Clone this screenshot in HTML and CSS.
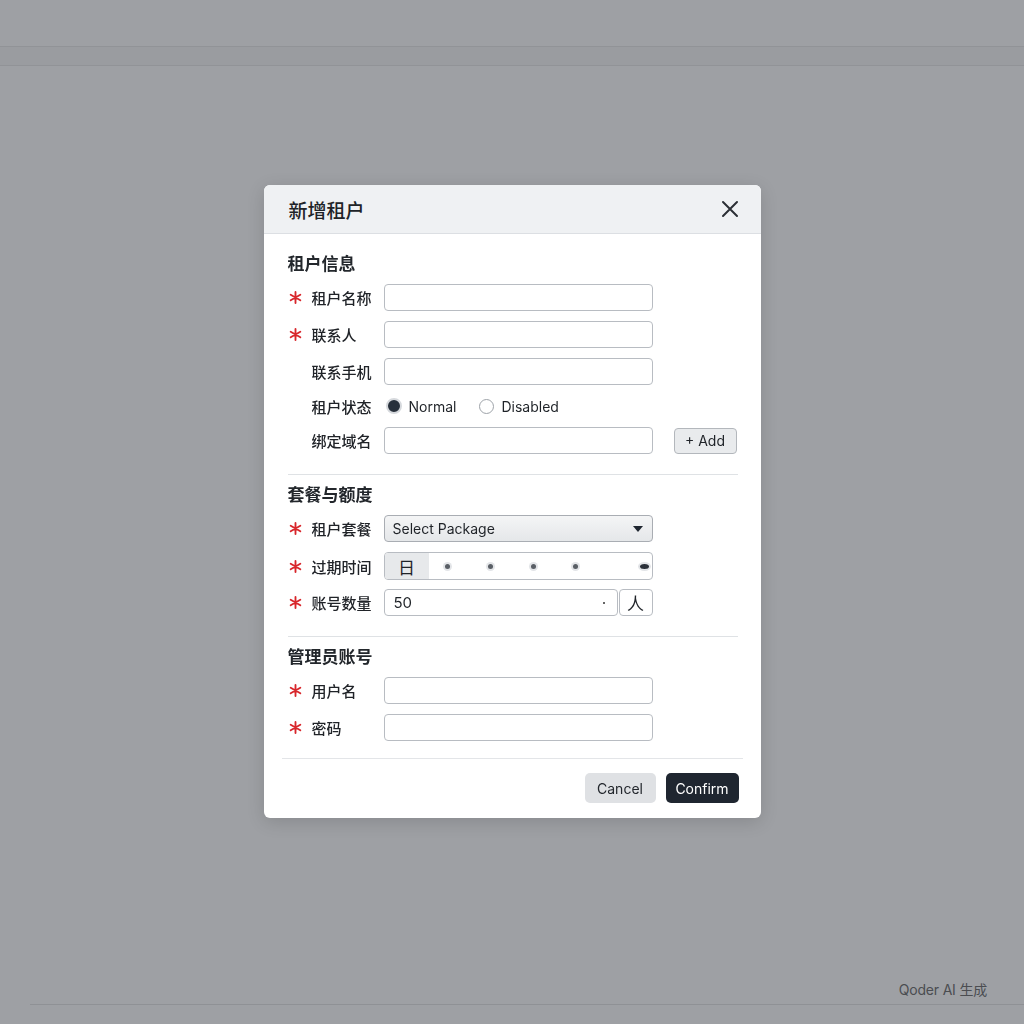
FILE: index.html
```html
<!DOCTYPE html>
<html lang="zh-CN">
<head>
<meta charset="utf-8">
<title>新增租户</title>
<link rel="stylesheet" href="styles.css">
</head>
<body>
<div class="page">
  <div class="topbar"></div>
  <div class="spacer"></div>
  <div class="watermark">Qoder AI 生成</div>
  <div class="bottom-line"></div>
</div>

<div class="overlay">
  <div class="modal">
    <div class="modal-header">
      <span class="modal-title">新增租户</span>
      <svg class="close" width="18" height="18" viewBox="0 0 18 18"><path d="M2 2L16 16M16 2L2 16" stroke="#2b2f35" stroke-width="2" stroke-linecap="round"/></svg>
    </div>
    <div class="modal-body">
      <section class="section">
        <h3 class="section-title">租户信息</h3>
        <div class="row">
          <span class="req"><svg width="13" height="13" viewBox="0 0 14 14"><path d="M7 1V13M1.8 4L12.2 10M12.2 4L1.8 10" stroke="#d8262b" stroke-width="2" stroke-linecap="round"/></svg></span>
          <label class="label">租户名称</label>
          <div class="input"></div>
        </div>
        <div class="row">
          <span class="req"><svg width="13" height="13" viewBox="0 0 14 14"><path d="M7 1V13M1.8 4L12.2 10M12.2 4L1.8 10" stroke="#d8262b" stroke-width="2" stroke-linecap="round"/></svg></span>
          <label class="label">联系人</label>
          <div class="input"></div>
        </div>
        <div class="row">
          <span class="req"></span>
          <label class="label">联系手机</label>
          <div class="input"></div>
        </div>
        <div class="row row-radio">
          <span class="req"></span>
          <label class="label">租户状态</label>
          <div class="radios">
            <span class="radio checked"></span><span class="radio-text">Normal</span>
            <span class="radio"></span><span class="radio-text">Disabled</span>
          </div>
        </div>
        <div class="row">
          <span class="req"></span>
          <label class="label">绑定域名</label>
          <div class="input"></div>
          <button class="btn-add">+ Add</button>
        </div>
      </section>
      <section class="section">
        <h3 class="section-title">套餐与额度</h3>
        <div class="row">
          <span class="req"><svg width="13" height="13" viewBox="0 0 14 14"><path d="M7 1V13M1.8 4L12.2 10M12.2 4L1.8 10" stroke="#d8262b" stroke-width="2" stroke-linecap="round"/></svg></span>
          <label class="label">租户套餐</label>
          <div class="select"><span>Select Package</span><span class="caret"></span></div>
        </div>
        <div class="row">
          <span class="req"><svg width="13" height="13" viewBox="0 0 14 14"><path d="M7 1V13M1.8 4L12.2 10M12.2 4L1.8 10" stroke="#d8262b" stroke-width="2" stroke-linecap="round"/></svg></span>
          <label class="label">过期时间</label>
          <div class="date">
            <span class="date-prefix">日</span>
            <div class="date-dots">
              <span class="dot"></span><span class="dot"></span><span class="dot"></span><span class="dot"></span>
              <span class="dot eye"></span>
            </div>
          </div>
        </div>
        <div class="row">
          <span class="req"><svg width="13" height="13" viewBox="0 0 14 14"><path d="M7 1V13M1.8 4L12.2 10M12.2 4L1.8 10" stroke="#d8262b" stroke-width="2" stroke-linecap="round"/></svg></span>
          <label class="label">账号数量</label>
          <div class="number">
            <div class="number-input"><span>50</span><span class="mini-dot"></span></div>
            <div class="number-addon">人</div>
          </div>
        </div>
      </section>
      <section class="section last">
        <h3 class="section-title">管理员账号</h3>
        <div class="row">
          <span class="req"><svg width="13" height="13" viewBox="0 0 14 14"><path d="M7 1V13M1.8 4L12.2 10M12.2 4L1.8 10" stroke="#d8262b" stroke-width="2" stroke-linecap="round"/></svg></span>
          <label class="label">用户名</label>
          <div class="input"></div>
        </div>
        <div class="row">
          <span class="req"><svg width="13" height="13" viewBox="0 0 14 14"><path d="M7 1V13M1.8 4L12.2 10M12.2 4L1.8 10" stroke="#d8262b" stroke-width="2" stroke-linecap="round"/></svg></span>
          <label class="label">密码</label>
          <div class="input"></div>
        </div>
      </section>
    </div>
    <div class="modal-footer">
      <div class="footer-inner">
        <button class="btn btn-cancel">Cancel</button>
        <button class="btn btn-confirm">Confirm</button>
      </div>
    </div>
  </div>
</div>
</body>
</html>
```

FILE: styles.css
```css
* { box-sizing: border-box; }

html, body {
  margin: 0;
  padding: 0;
}

body {
  background: #9ea0a4;
  font-family: "Inter", "Noto Sans CJK SC", sans-serif;
  color: #1f2328;
}

.page {
  height: 1024px;
  display: flex;
  flex-direction: column;
}

.topbar {
  margin-top: 46px;
  height: 20px;
  background: #9a9ca0;
  border-top: 1px solid #919397;
  border-bottom: 1px solid #919397;
}

.spacer { flex: 1; }

.watermark {
  height: 20px;
  line-height: 20px;
  text-align: right;
  padding-right: 37px;
  font-size: 14px;
  letter-spacing: -0.2px;
  color: #4b4d51;
  margin-bottom: 4px;
}

.bottom-line {
  height: 1px;
  margin-left: 30px;
  background: #8f9195;
  margin-bottom: 19px;
}

.overlay {
  position: fixed;
  inset: 0;
  display: flex;
  justify-content: center;
  align-items: flex-start;
  padding-top: 185px;
}

.modal {
  width: 497px;
  background: #ffffff;
  border-radius: 6px;
  overflow: hidden;
  box-shadow: 0 4px 18px rgba(0, 0, 0, 0.14);
}

.modal-header {
  height: 49px;
  background: #eff1f3;
  border-bottom: 1px solid #dcdfe3;
  display: flex;
  align-items: center;
  justify-content: space-between;
  padding: 0 22px 0 25px;
}

.modal-title {
  font-size: 19px;
  font-weight: 500;
  color: #202327;
}

.close { display: block; }

.modal-body {
  padding: 18px 23px 17px 24px;
}

.section {
  display: flex;
  flex-direction: column;
  gap: 10px;
  padding-bottom: 20px;
  border-bottom: 1px solid #dfe2e5;
  margin-bottom: 8px;
}

.section.last {
  padding-bottom: 0;
  border-bottom: none;
  margin-bottom: 0;
}

.section-title {
  margin: 0 0 -2px;
  font-size: 17px;
  line-height: 24px;
  font-weight: 600;
  color: #23272c;
}

.row {
  display: grid;
  grid-template-columns: 24px 72px 269px auto;
  align-items: center;
  height: 27px;
}

.row-radio { height: 22px; }

.req {
  display: flex;
  align-items: center;
  padding-left: 1px;
}

.req svg { display: block; }

.label {
  font-size: 15px;
  font-weight: 500;
  color: #202328;
}

.input {
  height: 27px;
  border: 1px solid #b8bcc2;
  border-radius: 4px;
  background: #fff;
}

.radios {
  display: flex;
  align-items: center;
  font-size: 14px;
  color: #1f2328;
}

.radio {
  width: 15px;
  height: 15px;
  border-radius: 50%;
  border: 1px solid #9da2a8;
  background: #fff;
  margin-right: 7px;
}

.radio.checked {
  width: 16px;
  height: 16px;
  border: 2px solid #d6d9dd;
  background: #27303b;
  margin-left: 2px;
  margin-right: 7px;
}

.radio-text { margin-right: 23px; }

.btn-add {
  margin-left: 21px;
  width: 63px;
  height: 26px;
  border: 1px solid #b3b7bc;
  border-radius: 4px;
  background: #e9ebed;
  font-family: inherit;
  font-size: 14px;
  color: #1f2328;
  padding: 0;
}

.select {
  height: 27px;
  border: 1px solid #a9adb3;
  border-radius: 4px;
  background: linear-gradient(#f4f5f6, #e5e7e9);
  display: flex;
  align-items: center;
  justify-content: space-between;
  padding: 0 9px 0 8px;
  font-size: 14px;
  color: #1f2328;
}

.caret {
  width: 0;
  height: 0;
  border-left: 5px solid transparent;
  border-right: 5px solid transparent;
  border-top: 6px solid #1f2630;
}

.date {
  height: 28px;
  border: 1px solid #b8bcc2;
  border-radius: 4px;
  display: flex;
  overflow: hidden;
  background: #fff;
}

.date-prefix {
  width: 44px;
  background: #e7e9eb;
  display: flex;
  align-items: center;
  justify-content: center;
  font-size: 17px;
  color: #1f2328;
}

.date-dots {
  flex: 1;
  display: flex;
  align-items: center;
  padding-left: 16px;
}

.dot {
  width: 5px;
  height: 5px;
  border-radius: 50%;
  background: #5a5f66;
  box-shadow: 0 0 0 2px #e3e5e8;
  margin-right: 38px;
}

.dot:nth-child(3) { margin-right: 37px; }

.dot.eye {
  width: 9px;
  height: 5px;
  background: #2b313a;
  margin-left: 24px;
  margin-right: 0;
  border-radius: 50%;
}

.number {
  display: flex;
  height: 27px;
}

.number-input {
  flex: 1;
  border: 1px solid #b8bcc2;
  border-radius: 4px;
  display: flex;
  align-items: center;
  justify-content: space-between;
  padding: 0 12px 0 9px;
  font-size: 15px;
  color: #1f2328;
}

.mini-dot {
  width: 2px;
  height: 2px;
  background: #333;
  border-radius: 50%;
}

.number-addon {
  width: 34px;
  margin-left: 1px;
  border: 1px solid #b8bcc2;
  border-radius: 4px;
  display: flex;
  align-items: center;
  justify-content: center;
  font-size: 17px;
  color: #1f2328;
}

.modal-footer {
  padding: 0 18px;
}

.footer-inner {
  border-top: 1px solid #e3e5e8;
  display: flex;
  justify-content: flex-end;
  gap: 10px;
  padding: 14px 4px 15px 0;
}

.btn {
  height: 30px;
  border: none;
  border-radius: 5px;
  font-family: inherit;
  font-size: 14px;
  padding: 0;
}

.btn-cancel {
  width: 71px;
  background: #dfe1e4;
  color: #23272d;
}

.btn-confirm {
  width: 73px;
  background: #1f2630;
  color: #ffffff;
}
```
